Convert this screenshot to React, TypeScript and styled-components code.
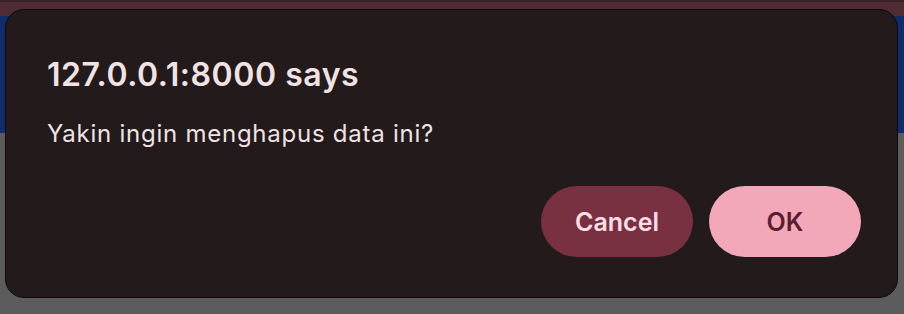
import React from 'react';
import styled, { createGlobalStyle } from 'styled-components';

const GlobalStyle = createGlobalStyle`
  html, body {
    margin: 0;
    padding: 0;
    width: 904px;
    height: 314px;
    overflow: hidden;
    background: #5c5c5c;
    font-family: Inter, "Noto Sans", "Liberation Sans", sans-serif;
  }
`;

const Page = styled.div`
  position: relative;
  width: 904px;
  height: 314px;
  display: flex;
  flex-direction: column;
  background: #5c5c5c;
`;

const Band = styled.div<{ $h: number; $color: string }>`
  height: ${(p) => p.$h}px;
  background: ${(p) => p.$color};
  flex-shrink: 0;
`;

const Dialog = styled.div`
  position: absolute;
  left: 5px;
  top: 9px;
  width: 893px;
  height: 289px;
  box-sizing: border-box;
  border: 1px solid #0f0b0c;
  border-radius: 19px;
  background: #221a1b;
  padding: 45px 36px 40px 41px;
  display: flex;
  flex-direction: column;
`;

const Title = styled.h1`
  margin: 0;
  font-size: 32px;
  line-height: 40px;
  font-weight: 600;
  color: #f1e2e4;
  letter-spacing: 0.55px;
`;

const Message = styled.p`
  margin: 24px 0 0;
  font-size: 24px;
  line-height: 30px;
  font-weight: 400;
  color: #f1e2e4;
  letter-spacing: 0.75px;
`;

const Actions = styled.div`
  margin-top: auto;
  display: flex;
  justify-content: flex-end;
  gap: 16px;
`;

const Button = styled.button<{ $primary?: boolean }>`
  width: 152px;
  height: 71px;
  border: none;
  border-radius: 36px;
  font-family: inherit;
  font-size: 25px;
  font-weight: 600;
  cursor: pointer;
  background: ${(p) => (p.$primary ? '#f2a8b8' : '#793142')};
  color: ${(p) => (p.$primary ? '#5b1d2d' : '#ffdfe4')};
`;

export default function App() {
  return (
    <>
      <GlobalStyle />
      <Page>
        <Band $h={2} $color="#3a2127" />
        <Band $h={14} $color="#4f2c34" />
        <Band $h={117} $color="#112c6c" />
        <Dialog role="alertdialog">
          <Title>127.0.0.1:8000 says</Title>
          <Message>Yakin ingin menghapus data ini?</Message>
          <Actions>
            <Button>Cancel</Button>
            <Button $primary>OK</Button>
          </Actions>
        </Dialog>
      </Page>
    </>
  );
}
